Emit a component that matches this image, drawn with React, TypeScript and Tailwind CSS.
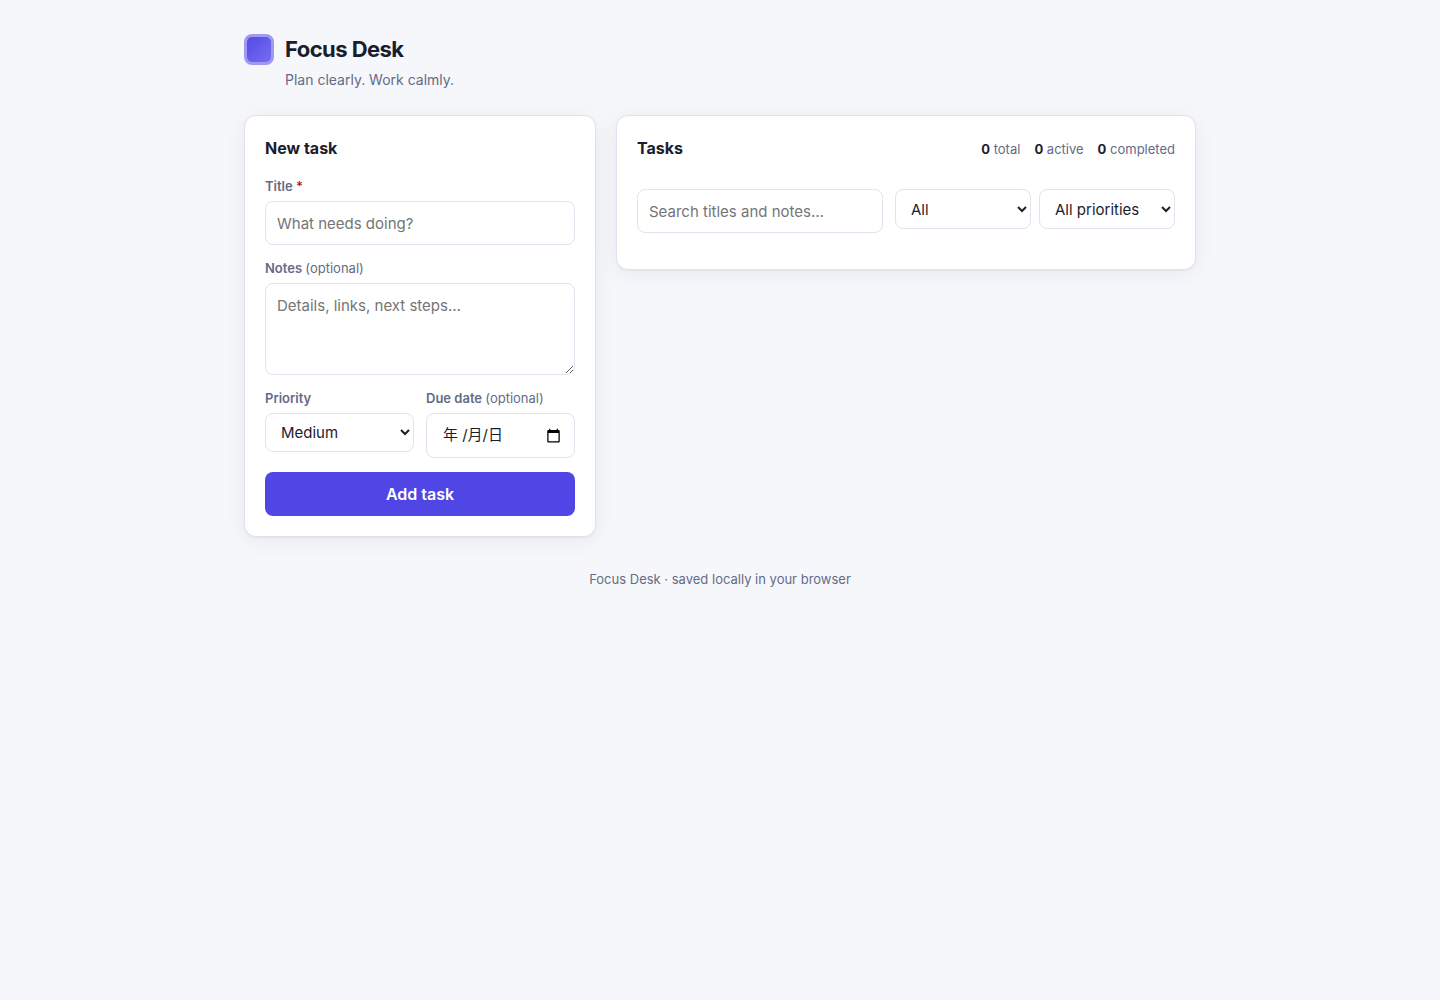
import { useState } from "react";

// Shared field styles
const fieldClass =
  "w-full rounded-lg border border-[#e2e2ef] bg-white text-[15px] text-[#1a1d2e] outline-none focus:border-[#4f46e5] placeholder:text-[#757575]";
const labelClass = "text-[13px] leading-[18px] font-semibold text-[#646b86]";
const cardClass =
  "rounded-xl border border-[#e2e2ef] bg-white p-5 shadow-[0_1px_2px_rgba(26,29,46,0.06),0_4px_24px_rgba(26,29,46,0.06)]";

/**
 * Page header with logo, name and tagline
 */
function Header() {
  return (
    <header className="grid grid-cols-[30px_1fr] items-center gap-x-[11px]">
      <span
        aria-hidden="true"
        className="h-[31px] w-[30px] rounded-lg border-3 border-[#a198f4] bg-linear-to-br from-[#4f46e5] to-[#7c6ff0] bg-origin-border"
      />
      <h1 className="text-[22px] leading-[34px] font-bold tracking-tight text-[#1a1d2e]">Focus Desk</h1>
      <p className="col-start-2 mt-1 text-sm leading-5 text-[#646b86]">Plan clearly. Work calmly.</p>
    </header>
  );
}

/**
 * Form for adding a task
 */
function NewTask() {
  const [title, setTitle] = useState("");
  const [notes, setNotes] = useState("");
  const [priority, setPriority] = useState("medium");
  const [due, setDue] = useState("");

  return (
    <section className={cardClass}>
      <h2 className="mb-4 text-base leading-[25px] font-bold text-[#1a1d2e]">New task</h2>
      <form className="flex flex-col gap-3.5" onSubmit={(e) => e.preventDefault()}>
        <div className="flex flex-col gap-1.5">
          <label htmlFor="title" className={labelClass}>
            Title <span className="text-[#b91c1c]">*</span>
          </label>
          <input
            id="title"
            type="text"
            value={title}
            onChange={(e) => setTitle(e.target.value)}
            placeholder="What needs doing?"
            className={`${fieldClass} h-11 px-[11px]`}
          />
        </div>

        <div className="flex flex-col gap-1.5">
          <label htmlFor="notes" className={labelClass}>
            Notes <span className="font-normal">(optional)</span>
          </label>
          <textarea
            id="notes"
            value={notes}
            onChange={(e) => setNotes(e.target.value)}
            placeholder="Details, links, next steps…"
            className={`${fieldClass} block h-[92px] resize-y px-[11px] py-2.5 leading-[23px]`}
          />
        </div>

        <div className="grid grid-cols-2 gap-3">
          <div className="flex flex-col gap-1.5">
            <label htmlFor="priority" className={labelClass}>
              Priority
            </label>
            <select
              id="priority"
              value={priority}
              onChange={(e) => setPriority(e.target.value)}
              className={`${fieldClass} h-[39px] pl-[11px]`}
            >
              <option value="low">Low</option>
              <option value="medium">Medium</option>
              <option value="high">High</option>
            </select>
          </div>

          <div className="flex flex-col gap-1.5">
            <label htmlFor="due" className={labelClass}>
              Due date <span className="font-normal">(optional)</span>
            </label>
            <div className="flex h-[45px] items-center rounded-lg border border-[#e2e2ef] bg-white pr-[13px] pl-4 focus-within:border-[#4f46e5]">
              <input
                id="due"
                type="text"
                value={due}
                onChange={(e) => setDue(e.target.value)}
                placeholder="年 /月/日"
                className="w-full min-w-0 flex-1 bg-transparent text-[15px] text-[#1a1d2e] outline-none placeholder:text-[#1a1d2e]"
              />
              <button type="button" aria-label="Open calendar" className="shrink-0">
                <svg width="15" height="15" viewBox="0 0 24 24" fill="#000">
                  <path d="M20 3h-1V1h-2v2H7V1H5v2H4c-1.1 0-2 .9-2 2v16c0 1.1.9 2 2 2h16c1.1 0 2-.9 2-2V5c0-1.1-.9-2-2-2zm0 18H4V8h16v13z" />
                </svg>
              </button>
            </div>
          </div>
        </div>

        <button
          type="submit"
          className="h-11 w-full rounded-lg bg-[#4f46e5] text-base font-semibold text-white hover:bg-[#4338ca]"
        >
          Add task
        </button>
      </form>
    </section>
  );
}

/**
 * Task panel with counters, search and filters
 */
function Tasks() {
  const [query, setQuery] = useState("");
  const [status, setStatus] = useState("all");
  const [priority, setPriority] = useState("all");

  const stats = [
    { label: "total", value: 0 },
    { label: "active", value: 0 },
    { label: "completed", value: 0 },
  ];

  return (
    <section className={cardClass}>
      <div className="mb-7 flex flex-wrap items-center justify-between">
        <h2 className="text-base leading-[25px] font-bold text-[#1a1d2e]">Tasks</h2>
        <div className="flex gap-3.5 text-[13px] leading-[18px] text-[#646b86]">
          {stats.map((s) => (
            <span key={s.label}>
              <strong className="font-bold text-[#1a1d2e]">{s.value}</strong> {s.label}
            </span>
          ))}
        </div>
      </div>

      <div className="mb-4 flex flex-wrap items-start gap-3">
        <input
          type="search"
          aria-label="Search tasks"
          value={query}
          onChange={(e) => setQuery(e.target.value)}
          placeholder="Search titles and notes…"
          className={`${fieldClass} h-11 min-w-[200px] flex-1 px-[11px]`}
        />
        <div className="flex gap-2">
          <select
            aria-label="Status"
            value={status}
            onChange={(e) => setStatus(e.target.value)}
            className={`${fieldClass} h-10 min-w-[136px] flex-1 pl-[11px]`}
          >
            <option value="all">All</option>
            <option value="active">Active</option>
            <option value="completed">Completed</option>
          </select>
          <select
            aria-label="Priority filter"
            value={priority}
            onChange={(e) => setPriority(e.target.value)}
            className={`${fieldClass} h-10 min-w-[136px] flex-1 pl-[11px]`}
          >
            <option value="all">All priorities</option>
            <option value="low">Low</option>
            <option value="medium">Medium</option>
            <option value="high">High</option>
          </select>
        </div>
      </div>
    </section>
  );
}

export default function App() {
  return (
    <div className="min-h-screen bg-[#f5f7fb] font-[Inter,'Noto_Sans_CJK_SC',sans-serif]">
      <div className="mx-auto max-w-[1000px] px-6 py-8">
        <Header />
        <main className="mt-[25px] grid items-start gap-5 md:grid-cols-[352px_1fr]">
          <NewTask />
          <Tasks />
        </main>
        <footer className="mt-8 text-center text-[13px] leading-5 text-[#646b86]">
          Focus Desk · saved locally in your browser
        </footer>
      </div>
    </div>
  );
}
